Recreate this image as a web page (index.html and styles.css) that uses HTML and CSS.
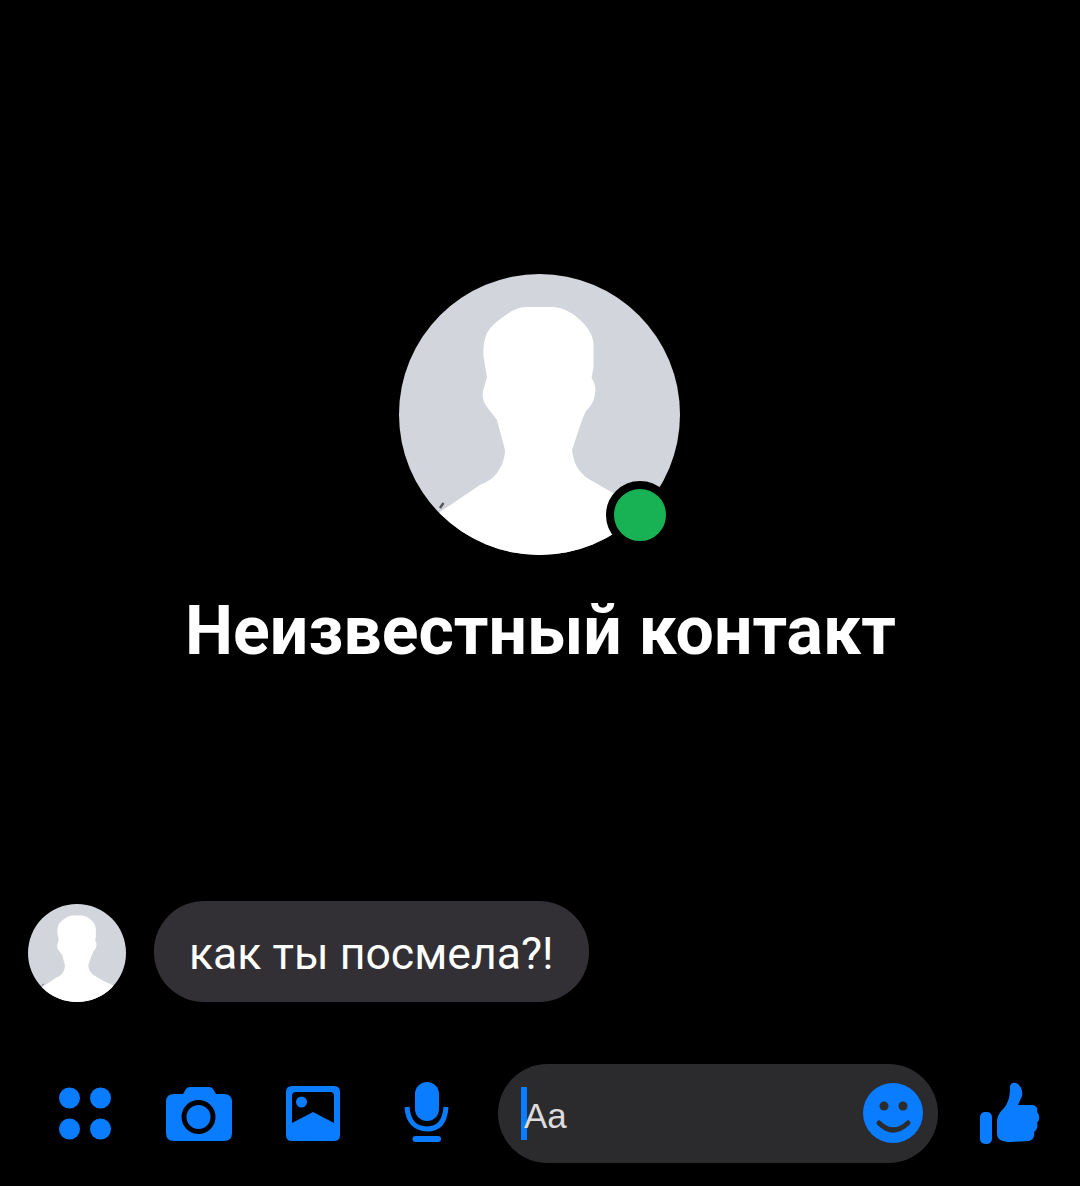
FILE: index.html
```html
<!DOCTYPE html>
<html lang="ru">
<head>
    <meta charset="UTF-8">
    <meta name="viewport" content="width=device-width, initial-scale=1.0">
    <title>Неизвестный контакт</title>
    <link rel="stylesheet" href="styles.css">
</head>
<body>
    <!-- Default profile picture, reused by both avatars -->
    <svg class="defs" width="0" height="0" aria-hidden="true">
        <symbol id="silhouette" viewBox="0 0 281 281">
            <rect width="281" height="281" fill="#d2d5dc"/>
            <path fill="#fff" d="M128 33 H154 C166 34 175 40 181 46 C190 54 194 62 194.5 70 L194.5 93 L192.5 104 C196 109 197 114 196 120 C195 127 192 132 187 137 L183 146 L173 176 C174 184 176 189 178 193 C183 201 189 205 195 208 L214 219 L300 260 V300 H0 L41 238 L81 211 C90 207 94 204 98 199 C103 192 106 184 106 176 L98 146 L88 133 C84 128 83 123 84 117 L88 103 L84.5 83 C84 73 85 66 88 59 C92 52 98 47 104 43 C112 37 119 33 128 33 Z"/>
            <path stroke="#555" stroke-width="2.5" d="M41 234 L44.5 229"/>
        </symbol>
    </svg>

    <main class="chat">
        <section class="contact">
            <div class="contact-photo">
                <svg class="avatar-large"><use href="#silhouette"/></svg>
                <span class="online-dot"></span>
            </div>
            <h1 class="contact-name">Неизвестный контакт</h1>
        </section>

        <div class="message">
            <svg class="avatar-small"><use href="#silhouette"/></svg>
            <p class="bubble">как ты посмела?!</p>
        </div>

        <footer class="composer">
            <!-- Menu -->
            <svg class="icon icon-menu" viewBox="0 0 54 54">
                <circle cx="11.5" cy="11" r="10.5"/>
                <circle cx="42.5" cy="11" r="10.5"/>
                <circle cx="11.5" cy="42" r="10.5"/>
                <circle cx="42.5" cy="42" r="10.5"/>
            </svg>
            <!-- Camera -->
            <svg class="icon icon-camera" viewBox="0 0 66 54">
                <path d="M8 7 H17 L20 2 Q21 0 24 0 H43 Q46 0 47 2 L50 7 H58 Q66 7 66 15 V46 Q66 54 58 54 H8 Q0 54 0 46 V15 Q0 7 8 7 Z"/>
                <circle cx="32.5" cy="30" r="17" fill="#000"/>
                <circle cx="32.5" cy="30" r="12"/>
            </svg>
            <!-- Gallery -->
            <svg class="icon icon-gallery" viewBox="0 0 54 55">
                <path fill-rule="evenodd" d="M6 0 H48 Q54 0 54 6 V49 Q54 55 48 55 H6 Q0 55 0 49 V6 Q0 0 6 0 Z M10 6 Q6 6 6 10 V37 L27 26 L48 37 V10 Q48 6 44 6 Z"/>
                <circle cx="15.5" cy="16" r="5.5"/>
            </svg>
            <!-- Voice message -->
            <svg class="icon icon-mic" viewBox="0 0 45 60">
                <rect x="11" y="0" width="24" height="39" rx="12"/>
                <path class="mic-arc" d="M3 25 C4 40 12 47 23 47 C34 47 41 40 42 25"/>
                <rect x="8.5" y="54" width="28.5" height="6" rx="3"/>
            </svg>

            <div class="input">
                <span class="caret"></span>
                <span class="placeholder">Aa</span>
                <svg class="icon icon-smile" viewBox="0 0 60 60">
                    <circle cx="30" cy="30" r="30"/>
                    <circle class="face" cx="21" cy="23" r="4.5"/>
                    <circle class="face" cx="40" cy="23" r="4.5"/>
                    <path class="smile-line" d="M16 40 Q30 54 45 40"/>
                </svg>
            </div>

            <!-- Like -->
            <svg class="icon icon-like" viewBox="0 0 62 63">
                <rect x="2" y="30" width="12" height="32" rx="5"/>
                <path d="M19 40 C19 34 22 30 26 26 C31 20 32 13 32 5 C32 1 36 0 38 1 C43 3 45 9 44 14 L40 23 H55 C59 24 60 27 59 30 C62 33 62 38 59 41 C60 45 59 48 56 50 C57 54 55 58 51 59 L32 60 C25 60 19 58 19 52 Z"/>
            </svg>
        </footer>
    </main>
</body>
</html>
```

FILE: styles.css
```css
* {
    margin: 0;
    padding: 0;
    box-sizing: border-box;
}

body {
    font-family: Roboto, "Liberation Sans", sans-serif;
    background: #000;
    color: #fff;
}

.defs {
    display: block;
}

.chat {
    height: 1186px;
    display: flex;
    flex-direction: column;
}

.contact {
    flex: 1;
    padding-top: 274px;
    padding-right: 1px;
    display: flex;
    flex-direction: column;
    align-items: center;
}

.contact-photo {
    position: relative;
    width: 281px;
    height: 281px;
}

.avatar-large {
    display: block;
    width: 281px;
    height: 281px;
    border-radius: 50%;
}

.online-dot {
    position: absolute;
    left: 207px;
    top: 207px;
    width: 68px;
    height: 68px;
    border-radius: 50%;
    background: #18b154;
    border: 8px solid #000;
}

.contact-name {
    margin-top: 34px;
    margin-left: 2px;
    font-size: 68px;
    line-height: 84px;
    font-weight: 700;
    white-space: nowrap;
}

.message {
    display: flex;
    align-items: flex-end;
    gap: 28px;
    padding-left: 28px;
}

.avatar-small {
    display: block;
    width: 98px;
    height: 98px;
    border-radius: 50%;
}

.bubble {
    height: 101px;
    padding: 0 35px;
    border-radius: 50px;
    background: #323034;
    font-size: 44.6px;
    line-height: 106px;
    white-space: nowrap;
}

.composer {
    display: flex;
    align-items: center;
    height: 99px;
    margin: 62px 0 23px;
    padding-left: 58px;
}

.icon {
    display: block;
    flex: none;
    fill: #0a7cff;
}

.icon-menu {
    width: 54px;
    height: 54px;
}

.icon-camera {
    width: 66px;
    height: 54px;
    margin-left: 54px;
}

.icon-gallery {
    width: 54px;
    height: 55px;
    margin-left: 54px;
}

.icon-mic {
    width: 45px;
    height: 60px;
    margin-left: 64px;
    margin-bottom: 4px;
}

.mic-arc {
    fill: none;
    stroke: #0a7cff;
    stroke-width: 5;
}

.input {
    position: relative;
    width: 440px;
    height: 99px;
    margin-left: 49px;
    padding: 0 15px 0 26px;
    display: flex;
    align-items: center;
    justify-content: space-between;
    border-radius: 50px;
    background: #2b2b2d;
}

.caret {
    position: absolute;
    left: 23px;
    top: 23px;
    width: 6px;
    height: 53px;
    background: #0a7cff;
}

.placeholder {
    position: relative;
    padding-top: 5px;
    font-family: "Liberation Sans", Arial, sans-serif;
    font-size: 35px;
    color: #dcdcdc;
}

.icon-smile {
    width: 60px;
    height: 60px;
    margin-bottom: 2px;
}

.face {
    fill: #2b2b2d;
}

.smile-line {
    fill: none;
    stroke: #2b2b2d;
    stroke-width: 5;
    stroke-linecap: round;
}

.icon-like {
    width: 62px;
    height: 63px;
    margin-left: 40px;
}
```
